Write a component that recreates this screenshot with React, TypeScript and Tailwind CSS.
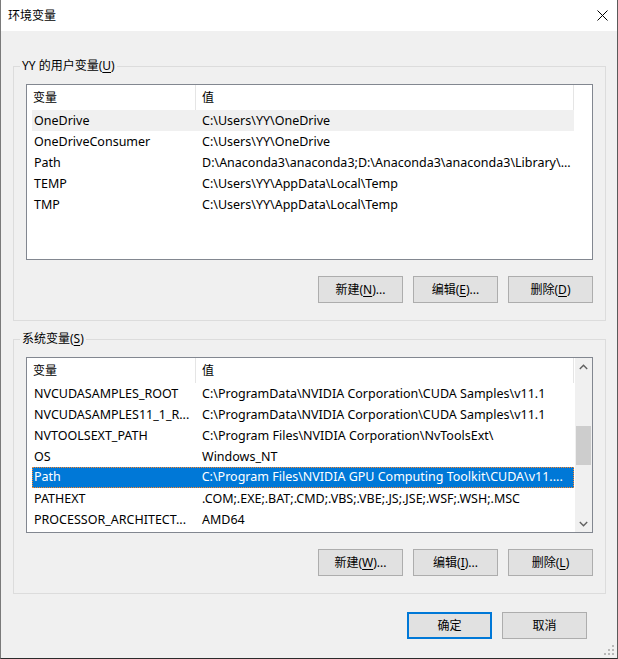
import React from "react";

type Row = { name: string; value: string };

const userRows: Row[] = [
  { name: "OneDrive", value: "C:\\Users\\YY\\OneDrive" },
  { name: "OneDriveConsumer", value: "C:\\Users\\YY\\OneDrive" },
  { name: "Path", value: "D:\\Anaconda3\\anaconda3;D:\\Anaconda3\\anaconda3\\Library\\..." },
  { name: "TEMP", value: "C:\\Users\\YY\\AppData\\Local\\Temp" },
  { name: "TMP", value: "C:\\Users\\YY\\AppData\\Local\\Temp" },
];

const sysRows: Row[] = [
  { name: "NVCUDASAMPLES_ROOT", value: "C:\\ProgramData\\NVIDIA Corporation\\CUDA Samples\\v11.1" },
  { name: "NVCUDASAMPLES11_1_R...", value: "C:\\ProgramData\\NVIDIA Corporation\\CUDA Samples\\v11.1" },
  { name: "NVTOOLSEXT_PATH", value: "C:\\Program Files\\NVIDIA Corporation\\NvToolsExt\\" },
  { name: "OS", value: "Windows_NT" },
  { name: "Path", value: "C:\\Program Files\\NVIDIA GPU Computing Toolkit\\CUDA\\v11...." },
  { name: "PATHEXT", value: ".COM;.EXE;.BAT;.CMD;.VBS;.VBE;.JS;.JSE;.WSF;.WSH;.MSC" },
  { name: "PROCESSOR_ARCHITECT...", value: "AMD64" },
];

function U({ children }: { children: React.ReactNode }) {
  return <span className="underline underline-offset-[2px]">{children}</span>;
}

function Btn({ children, primary }: { children: React.ReactNode; primary?: boolean }) {
  return (
    <button
      className={
        primary
          ? "w-[85px] h-[27px] bg-[#e1e1e1] border-2 border-[#0078d7] text-[12px] text-black flex items-center justify-center leading-none"
          : "w-[85px] h-[27px] bg-[#e1e1e1] border border-[#adadad] text-[12px] text-black flex items-center justify-center leading-none"
      }
    >
      {children}
    </button>
  );
}

function ListBox({
  rows,
  hoverIndex,
  selectedIndex,
  scroll,
}: {
  rows: Row[];
  hoverIndex?: number;
  selectedIndex?: number;
  scroll?: boolean;
}) {
  return (
    <div className="h-[176px] border border-[#828790] bg-white flex overflow-hidden">
      <div className="flex flex-col pl-[5px] w-[547px]">
        <div className="h-[25px] flex shrink-0 text-[12px]">
          <div className="w-[164px] pl-[1px] flex items-center border-r border-[#e5e5e5]">变量</div>
          <div className="w-[378px] pl-[6px] flex items-center border-r border-[#e5e5e5]">值</div>
        </div>
        {rows.map((r, i) => {
          const sel = i === selectedIndex;
          const hov = i === hoverIndex;
          return (
            <div
              key={i}
              className={
                sel
                  ? "h-[21px] w-[542px] flex shrink-0 bg-[#0078d7] text-white border border-dotted border-[#ff8728] text-[12.5px]"
                  : hov
                  ? "h-[21px] w-[542px] flex shrink-0 bg-[#f0f0f0] text-black text-[12.5px] pt-[1px]"
                  : "h-[21px] w-[542px] flex shrink-0 text-black text-[12.5px] pt-[1px]"
              }
            >
              <div
                className={
                  sel
                    ? "w-[163px] pl-[1px] flex items-center whitespace-nowrap overflow-hidden"
                    : "w-[164px] pl-[2px] flex items-center whitespace-nowrap overflow-hidden"
                }
              >
                {r.name}
              </div>
              <div className="w-[378px] pl-[6px] flex items-center whitespace-nowrap overflow-hidden">
                {r.value}
              </div>
            </div>
          );
        })}
      </div>
      {scroll ? (
        <div className="ml-auto w-[17px] bg-[#f0f0f0] flex flex-col">
          <div className="h-[17px] flex items-center justify-center">
            <svg width="9" height="6" viewBox="0 0 9 6">
              <polyline points="0.8,5 4.5,1.3 8.2,5" fill="none" stroke="#606060" strokeWidth="1.4" />
            </svg>
          </div>
          <div className="flex-1 flex flex-col px-[1px]">
            <div className="h-[51px]" />
            <div className="h-[39px] bg-[#cdcdcd]" />
          </div>
          <div className="h-[17px] flex items-center justify-center">
            <svg width="9" height="6" viewBox="0 0 9 6">
              <polyline points="0.8,1 4.5,4.7 8.2,1" fill="none" stroke="#606060" strokeWidth="1.4" />
            </svg>
          </div>
        </div>
      ) : null}
    </div>
  );
}

function Group({
  label,
  children,
  className,
}: {
  label: React.ReactNode;
  children: React.ReactNode;
  className: string;
}) {
  return (
    <fieldset className={"border border-[#dcdcdc] px-[12px] pt-[10px] pb-[17px] " + className}>
      <legend className="-ml-[6px] px-[2px] leading-[16px] text-[12px] text-black">{label}</legend>
      {children}
    </fieldset>
  );
}

export default function App() {
  return (
    <div className="w-[618px] h-[659px] bg-[#f0f0f0] border-l border-r border-b border-l-[#7a7a7a] border-r-[#5a5a5a] border-b-[#2b2b2b] flex flex-col relative font-['Noto_Sans','Noto_Sans_CJK_SC',sans-serif] text-[12px] text-black">
      <div className="h-[31px] bg-white flex items-center justify-between pl-[7px] pr-[9px] shrink-0">
        <span className="text-[12px] leading-none">环境变量</span>
        <svg width="11" height="11" viewBox="0 0 11 11">
          <path d="M0.5 0.5 L10.5 10.5 M10.5 0.5 L0.5 10.5" stroke="#000" strokeWidth="1" />
        </svg>
      </div>

      <Group
        className="mt-[27px] ml-[12px] mr-[11px]"
        label={
          <>
            YY 的用户变量(<U>U</U>)
          </>
        }
      >
        <ListBox rows={userRows} hoverIndex={0} />
        <div className="mt-[16px] flex justify-end gap-[10px]">
          <Btn>
            新建(<U>N</U>)...
          </Btn>
          <Btn>
            编辑(<U>E</U>)...
          </Btn>
          <Btn>
            删除(<U>D</U>)
          </Btn>
        </div>
      </Group>

      <Group
        className="mt-[10px] ml-[12px] mr-[11px]"
        label={
          <>
            系统变量(<U>S</U>)
          </>
        }
      >
        <ListBox rows={sysRows} selectedIndex={4} scroll />
        <div className="mt-[16px] flex justify-end gap-[10px]">
          <Btn>
            新建(<U>W</U>)...
          </Btn>
          <Btn>
            编辑(<U>I</U>)...
          </Btn>
          <Btn>
            删除(<U>L</U>)
          </Btn>
        </div>
      </Group>

      <div className="mt-[18px] mr-[30px] flex justify-end gap-[10px]">
        <Btn primary>确定</Btn>
        <Btn>取消</Btn>
      </div>

      <svg className="absolute right-[2px] bottom-[2px]" width="11" height="11" viewBox="0 0 11 11">
        <rect x="8" y="0" width="2" height="2" fill="#b8b8b8" />
        <rect x="4" y="4" width="2" height="2" fill="#b8b8b8" />
        <rect x="8" y="4" width="2" height="2" fill="#b8b8b8" />
        <rect x="0" y="8" width="2" height="2" fill="#b8b8b8" />
        <rect x="4" y="8" width="2" height="2" fill="#b8b8b8" />
        <rect x="8" y="8" width="2" height="2" fill="#b8b8b8" />
      </svg>
    </div>
  );
}
